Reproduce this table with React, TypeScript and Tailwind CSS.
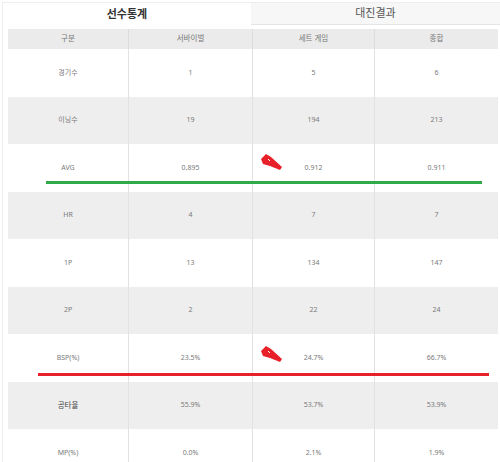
import React from 'react';

const rows: [string, string, string, string][] = [
  ['경기수', '1', '5', '6'],
  ['이닝수', '19', '194', '213'],
  ['AVG', '0.895', '0.912', '0.911'],
  ['HR', '4', '7', '7'],
  ['1P', '13', '134', '147'],
  ['2P', '2', '22', '24'],
  ['BSP(%)', '23.5%', '24.7%', '66.7%'],
  ['공타율', '55.9%', '53.7%', '53.9%'],
  ['MP(%)', '0.0%', '2.1%', '1.9%'],
];

const Marker = ({ className }: { className: string }) => (
  <svg className={className} width="24" height="17" viewBox="0 0 24 17">
    <polygon points="1,5 6,0 11,3 22,13 20,16 10,12 3,10" fill="#e8202a" />
    <path d="M8 5 L10 7" stroke="#fff" strokeWidth="1" />
  </svg>
);

export default function App() {
  return (
    <div className="relative w-[500px] h-[462px] overflow-hidden bg-white text-[#7a7a7a]" style={{ fontFamily: '"Noto Sans", "Noto Sans CJK KR", sans-serif' }}>
      <div className="ml-[2px] mt-[2px] border-l border-t border-[#eeeeee] h-full">
        <div className="flex h-[22px]">
          <div className="w-[248px] flex items-center justify-center text-[11px] font-bold text-[#333] bg-white">선수통계</div>
          <div className="flex-1 flex items-center justify-center text-[11px] text-[#555] bg-[#f7f7f7] border-b border-[#e6e6e6]">대진결과</div>
        </div>
        <div className="ml-[5px] mr-[2px] mt-[4px]">
          <div className="grid grid-cols-[121px_124px_122px_1fr] h-[20px] bg-[#ebebeb] text-[7.5px] text-[#777]">
            <div className="flex items-center justify-center border-r border-[#dcdcdc]">구분</div>
            <div className="flex items-center justify-center border-r border-[#dcdcdc]">서바이벌</div>
            <div className="flex items-center justify-center border-r border-[#dcdcdc]">세트 게임</div>
            <div className="flex items-center justify-center">종합</div>
          </div>
          {rows.map((r, i) => (
            <div key={r[0]} className={`grid grid-cols-[121px_124px_122px_1fr] h-[47.5px] text-[7px] ${i % 2 === 1 ? 'bg-[#eeeeee]' : 'bg-white'}`}>
              {r.map((c, j) => (
                <div key={j} className={`flex items-center justify-center ${j < 3 ? 'border-r border-[#e2e2e2]' : ''} ${r[0] === '공타율' && j === 0 ? 'text-[#444] text-[7.5px]' : ''}`}>{c}</div>
              ))}
            </div>
          ))}
        </div>
      </div>
      <div className="absolute left-[46px] top-[181px] w-[436px] h-[3px] bg-[#2eaa48]" />
      <div className="absolute left-[38px] top-[373px] w-[451px] h-[3px] bg-[#e8202a]" />
      <Marker className="absolute left-[260px] top-[154px]" />
      <Marker className="absolute left-[260px] top-[346px]" />
    </div>
  );
}
